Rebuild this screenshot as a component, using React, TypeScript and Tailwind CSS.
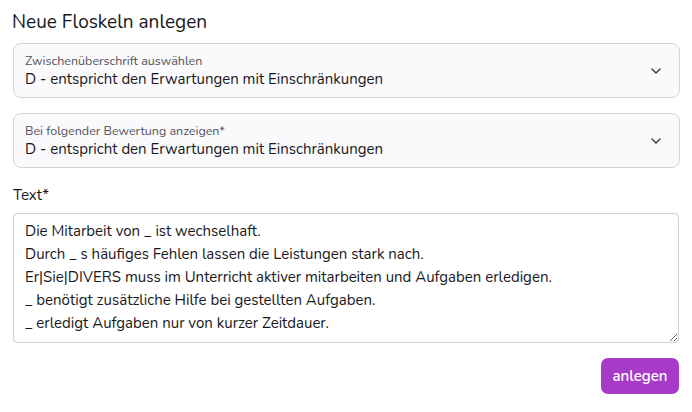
import React from "react";

const font = { fontFamily: '"Nunito", "Open Sans", "Noto Sans", sans-serif' };

function Chevron() {
  return (
    <svg width="14" height="14" viewBox="0 0 14 14" fill="none" className="shrink-0">
      <path d="M3 5l4 4 4-4" stroke="#3f3f46" strokeWidth="1.5" strokeLinecap="round" strokeLinejoin="round" />
    </svg>
  );
}

function SelectBox({ label, value }: { label: string; value: string }) {
  return (
    <div className="flex items-center h-[55px] rounded-[8px] border border-[#d4d4d8] bg-[#fafafc] pl-[11px] pr-[16px]">
      <div className="flex flex-col flex-1 min-w-0 gap-[2px]">
        <span className="text-[12.5px] leading-[14px] text-[#52525b]">{label}</span>
        <span className="text-[15px] leading-[18px] text-[#18181b]">{value}</span>
      </div>
      <Chevron />
    </div>
  );
}

export default function App() {
  const lines = [
    "Die Mitarbeit von _ ist wechselhaft.",
    "Durch _ s häufiges Fehlen lassen die Leistungen stark nach.",
    "Er|Sie|DIVERS muss im Unterricht aktiver mitarbeiten und Aufgaben erledigen.",
    "_ benötigt zusätzliche Hilfe bei gestellten Aufgaben.",
    "_ erledigt Aufgaben nur von kurzer Zeitdauer.",
  ];
  return (
    <div style={font} className="w-[692px] h-[412px] bg-white px-[13px] pt-[10px] text-[#18181b]">
      <h1 className="text-[19px] leading-[24px] ml-[-1px]">Neue Floskeln anlegen</h1>
      <div className="mt-[9px] mr-[-1px]">
        <SelectBox label="Zwischenüberschrift auswählen" value="D - entspricht den Erwartungen mit Einschränkungen" />
      </div>
      <div className="mt-[15px] mr-[-1px]">
        <SelectBox label="Bei folgender Bewertung anzeigen*" value="D - entspricht den Erwartungen mit Einschränkungen" />
      </div>
      <div className="mt-[17px] text-[15px] leading-[20px]">Text*</div>
      <textarea
        style={font}
        className="mt-[8px] block w-[666px] h-[130px] rounded-[4px] border border-[#cfcfd4] px-[11px] py-[6px] text-[15px] leading-[23px] text-[#18181b] outline-none"
        defaultValue={lines.join("\n")}
      />
      <div className="flex justify-end mt-[15px] mr-[0px]">
        <button className="h-[36px] w-[78px] rounded-[7px] bg-[#a73ac8] text-white text-[15px] font-semibold">
          anlegen
        </button>
      </div>
    </div>
  );
}
